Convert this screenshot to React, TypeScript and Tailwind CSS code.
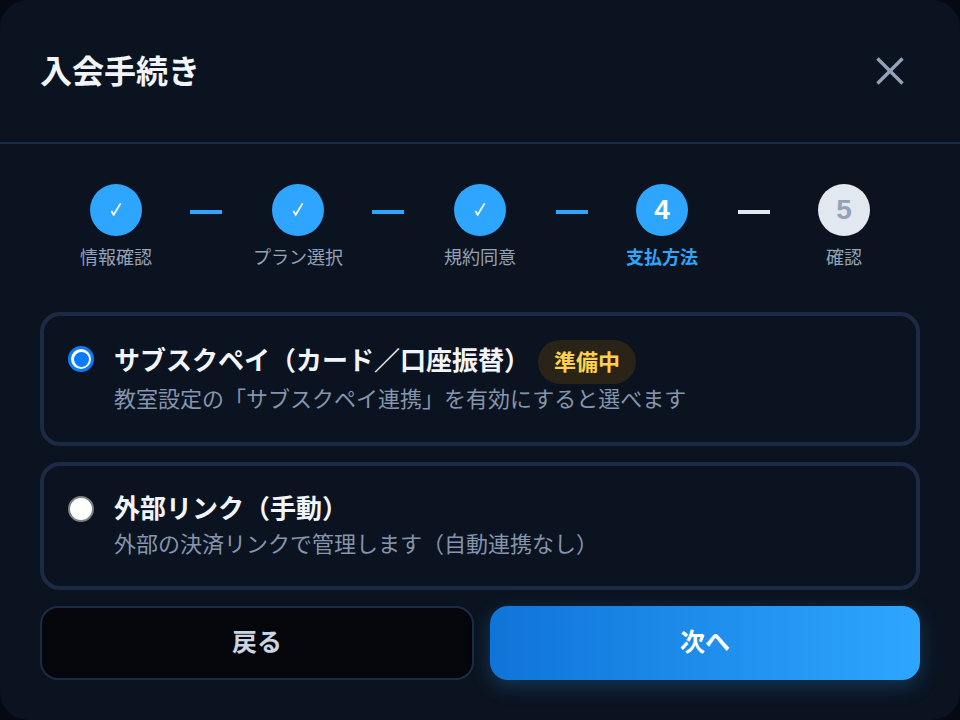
import { X } from 'lucide-react'

const FONT = "font-['Liberation_Sans','Noto_Sans_CJK_JP',sans-serif]"

const STEPS = [
  { label: '情報確認', state: 'done' },
  { label: 'プラン選択', state: 'done' },
  { label: '規約同意', state: 'done' },
  { label: '支払方法', state: 'current', num: '4' },
  { label: '確認', state: 'todo', num: '5' },
]

// the connectors don't sit quite centred between the steps
const LINES = [
  'ml-[15px] mr-[17px] bg-[#2ea6ff]',
  'ml-[15px] mr-[17px] bg-[#2ea6ff]',
  'ml-[17px] mr-[15px] bg-[#2ea6ff]',
  'ml-[17px] mr-[15px] bg-[#e2e8f0]',
]

function Step({ label, state, num }: { label: string; state: string; num?: string }) {
  return (
    <div className="w-[118px] shrink-0 flex flex-col items-center">
      <div
        className={`w-[52px] h-[52px] rounded-full flex items-center justify-center font-bold text-[28px] ${
          state === 'todo' ? 'bg-[#e2e8f0] text-[#94a3b8]' : 'bg-[#2ea6ff] text-white'
        }`}
      >
        {state === 'done' ? (
          <svg width="16" height="16" viewBox="0 0 16 16" fill="none" stroke="currentColor" strokeWidth="1.7">
            <path d="M3.4 9L5.7 12.8L12.6 1.4" />
          </svg>
        ) : (
          num
        )}
      </div>
      <div
        className={`mt-[9px] text-[18px] leading-[26px] whitespace-nowrap ${
          state === 'current' ? 'font-bold text-[#2ea6ff]' : 'text-[#94a3b8]'
        }`}
      >
        {label}
      </div>
    </div>
  )
}

export default function App() {
  return (
    <div className={`${FONT} w-[960px] h-[720px] bg-[#050912] overflow-hidden`}>
      <div className="w-full h-full rounded-[28px] bg-[#0b1320] flex flex-col">
        {/* Header */}
        <div className="h-[144px] shrink-0 border-b-2 border-[#1c2b45] pl-10 pr-[50px] flex items-center justify-between">
          <h1 className="text-[32px] font-bold text-[#f1f5f9] mt-[2px]">入会手続き</h1>
          <X size={50} strokeWidth={1.6} strokeLinecap="butt" className="text-[#94a3b8] -mr-[5px]" />
        </div>

        {/* Stepper */}
        <div className="mt-10 flex justify-center">
          {STEPS.map((s, i) => (
            <div key={s.label} className="flex">
              <Step label={s.label} state={s.state} num={s.num} />
              {i < LINES.length && <div className={`w-8 h-1 mt-[26px] ${LINES[i]}`} />}
            </div>
          ))}
        </div>

        <div className="mt-[41px] px-10 flex flex-col gap-4">
          {/* Option 1 */}
          <div className="h-[134px] border-4 border-[#1c2b45] rounded-[20px] pl-6 pr-6 pt-6 flex gap-5">
            <div className="w-[26px] h-[26px] mt-[6px] shrink-0 rounded-full bg-white border-[3px] border-[#0a7aff] flex items-center justify-center">
              <div className="w-[15px] h-[15px] rounded-full bg-[#0a7aff]" />
            </div>
            <div>
              <div className="flex items-center gap-2 h-[44px]">
                <span className="text-[26px] font-bold text-[#f1f5f9] whitespace-nowrap mb-[2px]">サブスクペイ（カード／口座振替）</span>
                <span className="h-[44px] px-4 rounded-full bg-[#2a2418] text-[#ffd24a] text-[22px] font-bold flex items-center">準備中</span>
              </div>
              <div className="text-[22px] leading-[32px] text-[#8495ae] whitespace-nowrap">教室設定の「サブスクペイ連携」を有効にすると選べます</div>
            </div>
          </div>

          {/* Option 2 */}
          <div className="h-[128px] border-4 border-[#1c2b45] rounded-[20px] pl-6 pr-6 pt-6 flex gap-5">
            <div className="w-[26px] h-[26px] mt-[6px] shrink-0 rounded-full bg-white border-2 border-[#808080]" />
            <div>
              <div className="mt-[1px] text-[26px] leading-[36px] font-bold text-[#f1f5f9] whitespace-nowrap">外部リンク（手動）</div>
              <div className="mt-[2px] text-[22px] leading-[32px] text-[#8495ae] whitespace-nowrap">外部の決済リンクで管理します（自動連携なし）</div>
            </div>
          </div>

          {/* Buttons */}
          <div className="flex gap-4">
            <button className="w-[434px] h-[74px] rounded-[18px] bg-[#04060b] border-2 border-[#1c2b45] text-[25px] font-bold text-[#cbd5e1]">戻る</button>
            <button className="flex-1 h-[74px] rounded-[18px] bg-gradient-to-r from-[#0f74d8] to-[#2ea6ff] shadow-[0_6px_20px_rgba(46,166,255,0.25)] text-[25px] font-bold text-white">次へ</button>
          </div>
        </div>
      </div>
    </div>
  )
}
